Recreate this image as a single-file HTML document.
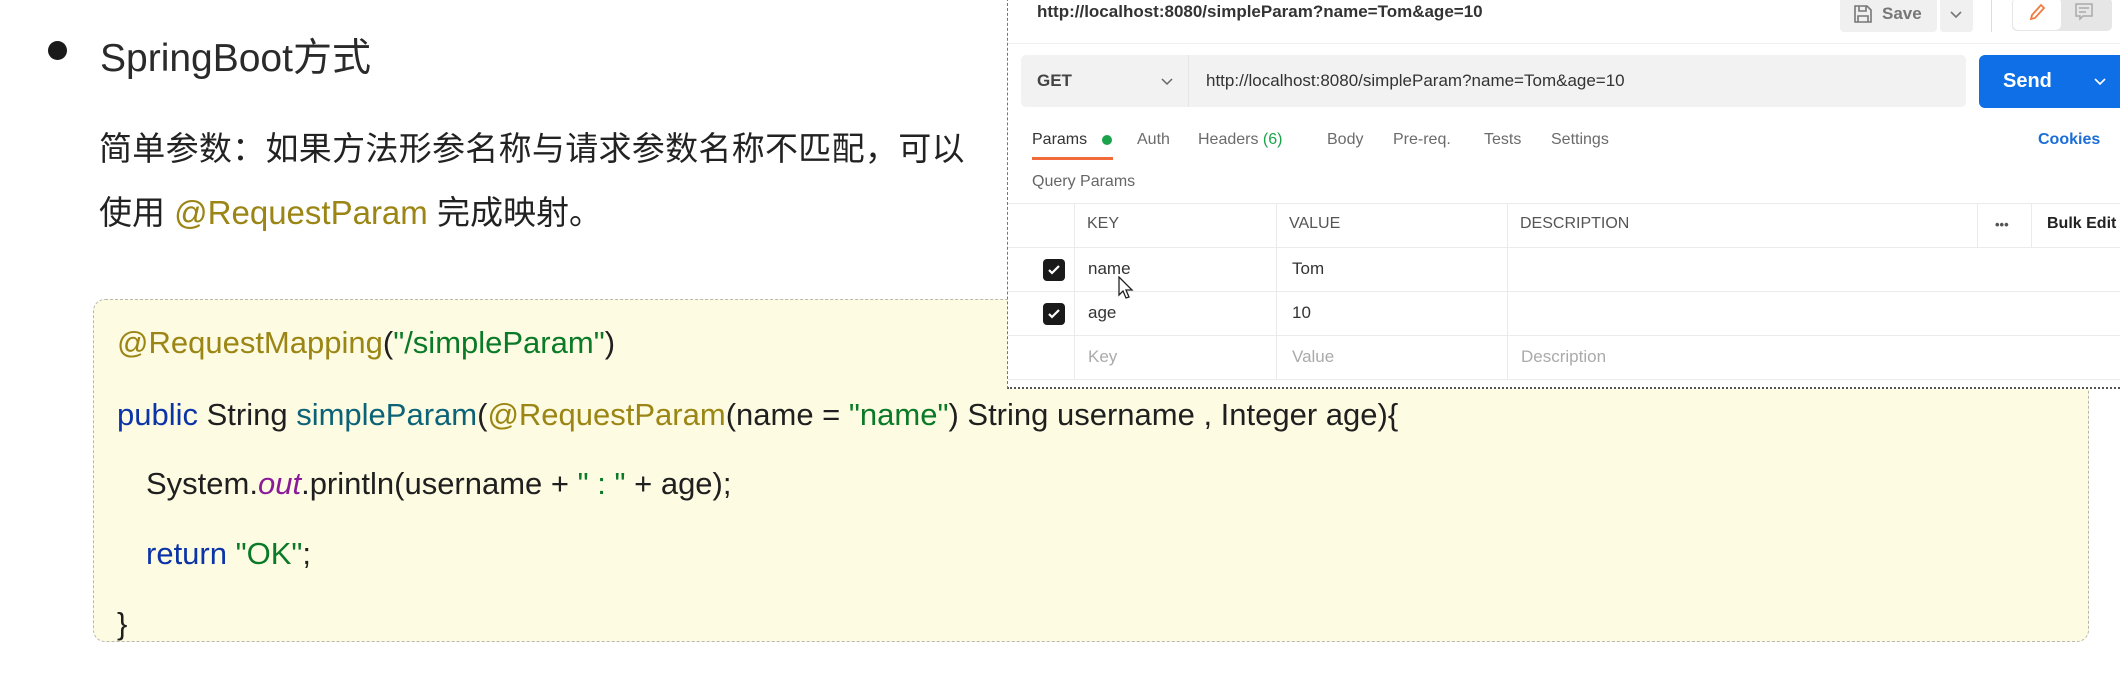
<!DOCTYPE html>
<html><head><meta charset="utf-8"><style>
*{margin:0;padding:0;box-sizing:border-box}
body{width:2120px;height:673px;background:#fff;position:relative;overflow:hidden;font-family:"Liberation Sans","Noto Sans CJK SC",sans-serif}
.a{position:absolute;white-space:nowrap}
.cjk{font-family:"Liberation Sans","Noto Sans CJK SC",sans-serif;color:#222}
.code{font-size:31px;color:#1f1f1f;line-height:1}
.ann{color:#9b8515}.str{color:#0a7a28}.kw{color:#0b34a8}.fn{color:#0c6378}.it{color:#8a1a9a;font-style:italic}
.p{font-size:17px;color:#333}
.tab{font-size:16px;color:#6b6b6b;top:131px}
.hd{font-size:16px;color:#555;top:215px}
.vl{position:absolute;top:203px;height:176px;width:1px;background:#ebebeb}
.hl{position:absolute;left:1008px;width:1112px;height:1px;background:#ebebeb}
.cb{position:absolute;left:1043px;width:22px;height:22px;background:#1a1a1a;border-radius:4px}
</style></head><body>
<div class="a" style="left:48px;top:41px;width:19px;height:19px;border-radius:50%;background:#1a1a1a"></div>
<div class="a cjk" style="left:100px;top:27px;font-size:39px;color:#2a2a2a">SpringBoot方式</div>
<div class="a cjk" style="left:99px;top:122px;font-size:33px;letter-spacing:0.3px">简单参数：如果方法形参名称与请求参数名称不匹配，可以</div>
<div class="a cjk" style="left:99px;top:186px;font-size:33px">使用 <span class="ann">@RequestParam</span> 完成映射。</div>

<div class="a" style="left:93px;top:299px;width:1996px;height:343px;background:#fdfbe1;border:1.5px dashed #b8b8b0;border-radius:12px"></div>
<div class="a code" style="left:117px;top:327px"><span class="ann">@RequestMapping</span>(<span class="str">"/simpleParam"</span>)</div>
<div class="a code" style="left:117px;top:399px"><span class="kw">public</span> String <span class="fn">simpleParam</span>(<span class="ann">@RequestParam</span>(name = <span class="str">"name"</span>) String username , Integer age){</div>
<div class="a code" style="left:146px;top:468px">System.<span class="it">out</span>.println(username + <span class="str">" : "</span> + age);</div>
<div class="a code" style="left:146px;top:538px"><span class="kw">return</span> <span class="str">"OK"</span>;</div>
<div class="a code" style="left:117px;top:608px">}</div>

<div class="a" style="left:1007px;top:-2px;width:1120px;height:391px;background:#fff;border-left:1.5px dashed #777;border-bottom:2px dotted #555"></div>
<div class="a" style="left:1037px;top:2px;font-size:17px;font-weight:bold;color:#333">http://localhost:8080/simpleParam?name=Tom&amp;age=10</div>
<div class="a" style="left:1840px;top:-2px;width:97px;height:34px;background:#f0f0f0;border-radius:4px"></div>
<svg class="a" style="left:1853px;top:4px" width="20" height="20" viewBox="0 0 20 20" fill="none" stroke="#777" stroke-width="1.6"><path d="M2 2h12l4 4v12H2z M6 2v5h7V2 M5 18v-6h10v6"/></svg>
<div class="a" style="left:1882px;top:4px;font-size:17px;font-weight:bold;color:#777">Save</div>
<div class="a" style="left:1940px;top:-2px;width:33px;height:34px;background:#f0f0f0;border-radius:4px"></div>
<svg class="a" style="left:1949px;top:10px" width="14" height="10" viewBox="0 0 14 10" fill="none" stroke="#777" stroke-width="1.6"><path d="M2 2l5 5 5-5"/></svg>
<div class="a" style="left:1991px;top:0;width:1px;height:32px;background:#ddd"></div>
<div class="a" style="left:2012px;top:-2px;width:100px;height:33px;background:#e6e6e6;border-radius:5px"></div>
<div class="a" style="left:2013px;top:-2px;width:48px;height:32px;background:#fff;border-radius:5px"></div>
<svg class="a" style="left:2027px;top:2px" width="20" height="20" viewBox="0 0 20 20" fill="none" stroke="#f07a40" stroke-width="1.8"><path d="M4 17l1-4 9-10 3 3-9 10z"/></svg>
<svg class="a" style="left:2074px;top:3px" width="20" height="18" viewBox="0 0 20 18" fill="none" stroke="#aaa" stroke-width="1.5"><path d="M2 1h16v12H9l-3 3v-3H2z M5 5h10 M5 9h7"/></svg>
<div class="a" style="left:1008px;top:43px;width:1112px;height:1px;background:#f0f0f0"></div>

<div class="a" style="left:1021px;top:55px;width:945px;height:52px;background:#f2f2f2;border-radius:5px"></div>
<div class="a" style="left:1188px;top:55px;width:1px;height:52px;background:#e6e6e6"></div>
<div class="a" style="left:1037px;top:71px;font-size:17px;font-weight:bold;color:#444">GET</div>
<svg class="a" style="left:1160px;top:77px" width="14" height="10" viewBox="0 0 14 10" fill="none" stroke="#666" stroke-width="1.5"><path d="M2 2l5 5 5-5"/></svg>
<div class="a" style="left:1206px;top:71px;font-size:17px;color:#333">http://localhost:8080/simpleParam?name=Tom&amp;age=10</div>
<div class="a" style="left:1979px;top:55px;width:150px;height:53px;background:#0f6fe6;border-radius:6px"></div>
<div class="a" style="left:2003px;top:70px;font-size:20px;font-weight:bold;color:#fff">Send</div>
<svg class="a" style="left:2093px;top:77px" width="14" height="10" viewBox="0 0 14 10" fill="none" stroke="#fff" stroke-width="1.6"><path d="M2 2l5 5 5-5"/></svg>

<div class="a tab" style="left:1032px;color:#333">Params</div>
<div class="a" style="left:1102px;top:135px;width:10px;height:10px;border-radius:50%;background:#1aa34a"></div>
<div class="a" style="left:1032px;top:157px;width:81px;height:3px;background:#f26b3a"></div>
<div class="a tab" style="left:1137px">Auth</div>
<div class="a tab" style="left:1198px">Headers <span style="color:#1aa34a">(6)</span></div>
<div class="a tab" style="left:1327px">Body</div>
<div class="a tab" style="left:1393px">Pre-req.</div>
<div class="a tab" style="left:1484px">Tests</div>
<div class="a tab" style="left:1551px">Settings</div>
<div class="a tab" style="left:2038px;color:#1b6ed8;font-weight:bold">Cookies</div>
<div class="a" style="left:1032px;top:173px;font-size:16px;color:#666">Query Params</div>

<div class="hl" style="top:203px"></div>
<div class="hl" style="top:247px"></div>
<div class="hl" style="top:291px"></div>
<div class="hl" style="top:335px"></div>
<div class="hl" style="top:379px"></div>
<div class="vl" style="left:1074px"></div>
<div class="vl" style="left:1276px"></div>
<div class="vl" style="left:1507px"></div>
<div class="vl" style="left:1977px;height:44px"></div>
<div class="vl" style="left:2031px;height:44px"></div>
<div class="a hd" style="left:1087px">KEY</div>
<div class="a hd" style="left:1289px">VALUE</div>
<div class="a hd" style="left:1520px">DESCRIPTION</div>
<div class="a hd" style="left:1995px;font-size:13px;top:217px;font-weight:bold">•••</div>
<div class="a hd" style="left:2047px;color:#222;font-weight:bold">Bulk Edit</div>
<div class="cb" style="top:259px"></div>
<div class="cb" style="top:303px"></div>
<svg class="a" style="left:1046px;top:262px" width="16" height="16" viewBox="0 0 16 16" fill="none" stroke="#fff" stroke-width="2.2"><path d="M3 8l3 3 7-7"/></svg>
<svg class="a" style="left:1046px;top:306px" width="16" height="16" viewBox="0 0 16 16" fill="none" stroke="#fff" stroke-width="2.2"><path d="M3 8l3 3 7-7"/></svg>
<div class="a p" style="left:1088px;top:259px">name</div>
<div class="a p" style="left:1292px;top:259px">Tom</div>
<div class="a p" style="left:1088px;top:303px">age</div>
<div class="a p" style="left:1292px;top:303px">10</div>
<div class="a p" style="left:1088px;top:347px;color:#aaa">Key</div>
<div class="a p" style="left:1292px;top:347px;color:#aaa">Value</div>
<div class="a p" style="left:1521px;top:347px;color:#aaa">Description</div>
<svg class="a" style="left:1118px;top:276px" width="16" height="24" viewBox="0 0 16 24"><path d="M1 1v18l4-4 3 7 3-1-3-7h6z" fill="#fff" stroke="#222" stroke-width="1.3"/></svg>
</body></html>
